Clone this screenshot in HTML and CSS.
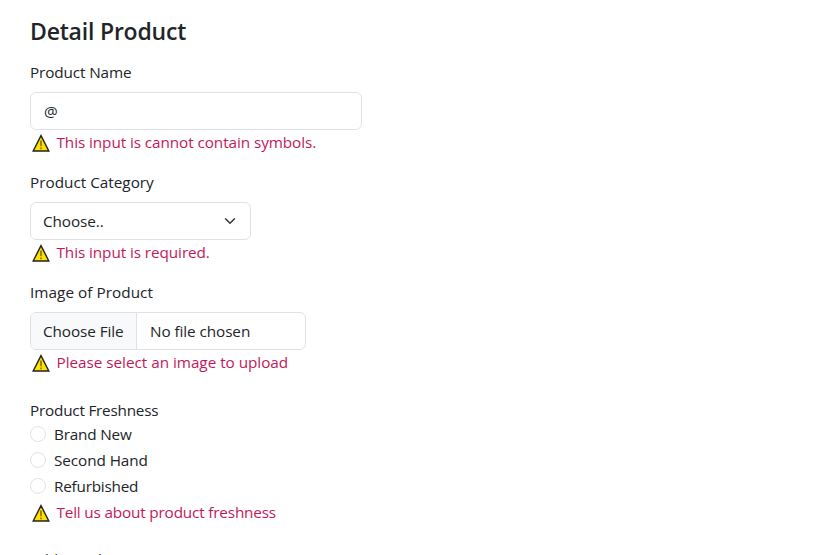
FILE: index.html
```html
<!DOCTYPE html>
<html lang="en">
<head>
<meta charset="utf-8">
<title>Detail Product</title>
<link rel="stylesheet" href="styles.css">
</head>
<body>
<svg class="defs" width="0" height="0">
  <symbol id="warning" viewBox="0 0 20 20">
    <path d="M10 2.6 17.8 18H2.2Z" fill="#ffe000" stroke="#222" stroke-width="1.4"/>
    <path d="M10 7.5v5.7M10 14.6v1.6" stroke="#4a4200" stroke-width="1.1"/>
  </symbol>
</svg>
<form class="form">
  <h4 class="title">Detail Product</h4>
  <div class="group">
    <label class="label l-name">Product Name</label>
    <div class="control name"><span class="at">@</span></div>
    <div class="error"><svg class="icon"><use href="#warning"/></svg><span>This input is cannot contain symbols.</span></div>
  </div>
  <div class="group">
    <label class="label l-category">Product Category</label>
    <div class="control category"><span>Choose..</span>
      <svg class="chevron" viewBox="0 0 16 16"><path d="m2 5 6 6 6-6" fill="none" stroke="#343a40" stroke-width="2" stroke-linecap="round" stroke-linejoin="round"/></svg>
    </div>
    <div class="error"><svg class="icon"><use href="#warning"/></svg><span>This input is required.</span></div>
  </div>
  <div class="group image">
    <label class="label l-image">Image of Product</label>
    <div class="control file"><span class="file-button">Choose File</span><span>No file chosen</span></div>
    <div class="error"><svg class="icon"><use href="#warning"/></svg><span class="e-image">Please select an image to upload</span></div>
  </div>
  <div class="group freshness">
    <div class="l-fresh">Product Freshness</div>
    <div class="check"><span class="radio"></span><span class="c-new">Brand New</span></div>
    <div class="check"><span class="radio"></span><span>Second Hand</span></div>
    <div class="check"><span class="radio"></span><span class="c-refurb">Refurbished</span></div>
    <div class="error"><svg class="icon"><use href="#warning"/></svg><span class="e-fresh">Tell us about product freshness</span></div>
  </div>
  <label class="label l-desc">Additional Description</label>
</form>
</body>
</html>
```
FILE: styles.css
```css
* { box-sizing: border-box; }
html { overflow: hidden; }
body {
  margin: 0;
  height: 555px;
  overflow: hidden;
  background: #fff;
  color: #212529;
  font: 400 15.3px/24px "Open Sans", "Noto Sans", sans-serif;
  letter-spacing: -0.08px;
  white-space: nowrap;
}
.defs { display: block; }
.form { padding: 17px 30px 0; }
.title { margin: 0 0 14px; font-size: 23px; line-height: 29px; font-weight: 600; letter-spacing: -0.2px; }
.group { margin-bottom: 16px; }
.group.image { margin-bottom: 24px; }
.group.freshness { margin-bottom: 23px; }
.label { display: block; margin-bottom: 8px; }
.l-name { letter-spacing: -0.12px; }
.l-category { letter-spacing: 0; }
.l-image { letter-spacing: 0.04px; }
.l-fresh { letter-spacing: -0.22px; }
.l-desc { letter-spacing: -0.08px; }
.c-new { letter-spacing: -0.18px; }
.c-refurb { letter-spacing: -0.22px; }
.e-image { letter-spacing: -0.03px; }
.e-fresh { letter-spacing: -0.17px; }
.at { padding-left: 1px; }
.control {
  display: flex;
  align-items: center;
  height: 38px;
  padding: 0 12px;
  border: 1px solid #dee2e6;
  border-radius: 6px;
  overflow: hidden;
}
.name { width: 332px; }
.category { width: 221px; justify-content: space-between; }
.file { width: 276px; padding-left: 0; }
.chevron { width: 16px; height: 12px; }
.file-button {
  display: flex;
  align-items: center;
  width: 106px;
  height: 36px;
  margin-right: 13px;
  padding-left: 12px;
  background: #f8f9fa;
  border-right: 1px solid #dee2e6;
}
.error { display: flex; align-items: center; height: 24px; color: #c2185b; }
.icon { width: 20px; height: 20px; margin: 2px 5.5px 0 1px; }
.check { display: flex; align-items: center; height: 24px; margin-bottom: 2px; }
.radio { width: 16px; height: 16px; margin-right: 8px; border: 1px solid #dee2e6; border-radius: 50%; }
```
